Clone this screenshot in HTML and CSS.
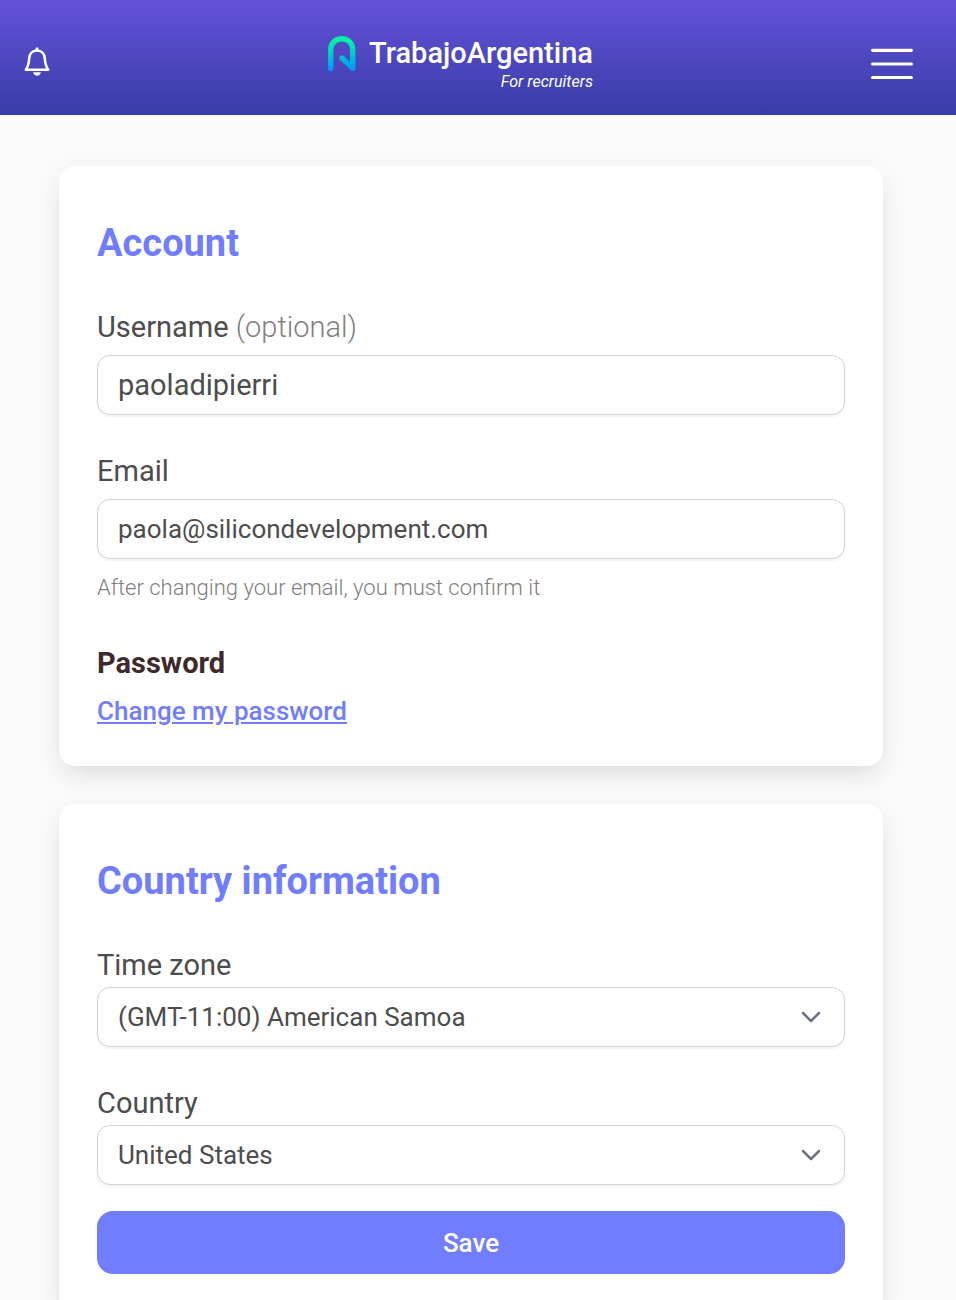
FILE: index.html
```html
<!DOCTYPE html>
<html lang="en">
<head>
<meta charset="utf-8">
<meta name="viewport" content="width=device-width, initial-scale=1">
<title>TrabajoArgentina – Account</title>
<link rel="stylesheet" href="styles.css">
</head>
<body>
<header class="topbar">
  <button class="icon-button notifications" type="button" aria-label="Notifications">
    <svg class="bell" viewBox="0 0 26 30" fill="none" stroke="#fff" stroke-width="2.500" stroke-linejoin="round" stroke-linecap="round">
      <path d="M13 3.600C8 3.600 5.400 7 5.200 11.300C5 16.500 4.400 19 1.800 22.700H24.200C21.600 19 21 16.500 20.800 11.300C20.600 7 18 3.600 13 3.600Z"/>
      <path d="M13 1.800V3" stroke-width="3"/>
      <path d="M9.200 25.300H16.800C16.500 27.500 15 28.800 13 28.800S9.500 27.500 9.200 25.300Z" fill="#fff" stroke="none"/>
    </svg>
  </button>
  <a class="brand" href="#">
    <svg class="brand-mark" viewBox="0 0 28 36" fill="none" stroke="url(#mark)" stroke-width="5.400" stroke-linecap="round" stroke-linejoin="round">
      <defs>
        <linearGradient id="mark" gradientUnits="userSpaceOnUse" x1="0" y1="0" x2="0" y2="36">
          <stop offset="0.150" stop-color="#00f2a6"/>
          <stop offset="1" stop-color="#0090ff"/>
        </linearGradient>
      </defs>
      <path d="M2.700 32.600V13.500C2.700 7 7.800 2.700 13.800 2.700S24.700 7 24.700 13.500V32.400L14 22"/>
    </svg>
    <span class="brand-text">
      <span class="brand-name">TrabajoArgentina</span>
      <span class="brand-tag">For recruiters</span>
    </span>
  </a>
  <button class="icon-button" type="button" aria-label="Menu">
    <svg class="burger" viewBox="0 0 42 32" stroke="#fff" stroke-width="3.200" stroke-linecap="round">
      <path d="M1.600 2.300H40.400M1.600 16H40.400M1.600 29.500H40.400"/>
    </svg>
  </button>
</header>
<main class="page">
  <section class="card">
    <h2 class="card-title">Account</h2>
    <div class="field">
      <label class="label" for="username">Username <span class="optional">(optional)</span></label>
      <input class="control control-large" id="username" type="text" value="paoladipierri">
    </div>
    <div class="field">
      <label class="label" for="email">Email</label>
      <input class="control" id="email" type="email" value="paola@silicondevelopment.com" aria-describedby="email-hint">
      <p class="hint" id="email-hint">After changing your email, you must confirm it</p>
    </div>
    <h3 class="subtitle">Password</h3>
    <a class="link" href="#">Change my password</a>
  </section>
  <form class="card">
    <h2 class="card-title">Country information</h2>
    <div class="field field-tight">
      <label class="label" for="timezone">Time zone</label>
      <div class="select">
        <select class="control" id="timezone"><option>(GMT-11:00) American Samoa</option></select>
        <svg class="chevron" viewBox="0 0 20 12" fill="none" stroke="#6b7280" stroke-width="2.500" stroke-linecap="round" stroke-linejoin="round"><path d="M2 2L10 10L18 2"/></svg>
      </div>
    </div>
    <div class="field field-tight">
      <label class="label" for="country">Country</label>
      <div class="select">
        <select class="control" id="country"><option>United States</option></select>
        <svg class="chevron" viewBox="0 0 20 12" fill="none" stroke="#6b7280" stroke-width="2.500" stroke-linecap="round" stroke-linejoin="round"><path d="M2 2L10 10L18 2"/></svg>
      </div>
    </div>
    <button class="save" type="button">Save</button>
  </form>
</main>
</body>
</html>
```
FILE: styles.css
```css
* {
  box-sizing: border-box;
}

body {
  margin: 0;
  background: #fafafa;
  color: #4d4d4d;
  font-family: Roboto, "Liberation Sans", sans-serif;
}

.topbar {
  display: flex;
  align-items: center;
  justify-content: space-between;
  padding: 32px 43px 20px 24px;
  background: linear-gradient(#6552d9, #373da7);
}

.icon-button {
  padding: 0;
  border: 0;
  background: none;
  cursor: pointer;
}

.icon-button svg {
  display: block;
}

.notifications {
  padding-bottom: 4px;
}

.bell {
  width: 26px;
  height: 30px;
}

.burger {
  width: 42px;
  height: 32px;
}

.brand {
  display: flex;
  align-items: flex-start;
  gap: 13px;
  color: #fff;
  text-decoration: none;
}

.brand-mark {
  width: 28px;
  height: 36px;
  margin-top: 4px;
}

.brand-text {
  display: flex;
  flex-direction: column;
  align-items: flex-end;
  padding-bottom: 6px;
}

.brand-name {
  font-size: 29px;
  font-weight: 500;
  line-height: 42px;
}

.brand-tag {
  font-size: 16px;
  font-style: italic;
  line-height: 15px;
}

.page {
  display: flex;
  flex-direction: column;
  gap: 38px;
  padding: 51px 73px 38px 59px;
}

.card {
  padding: 55px 38px 39px;
  border-radius: 16px;
  background: #fff;
  box-shadow: 0 6px 30px rgba(10, 60, 40, 0.06), 0 12px 24px -8px rgba(40, 30, 70, 0.12);
}

.card-title {
  margin: 0 0 42px;
  color: #717dff;
  font-size: 38px;
  font-weight: 700;
  line-height: 44px;
}

.field {
  display: flex;
  flex-direction: column;
  gap: 8px;
  margin-bottom: 36px;
}

.field-tight {
  gap: 2px;
}

.label {
  font-size: 29px;
  line-height: 40px;
}

.optional {
  color: #808080;
  font-weight: 300;
}

.control {
  width: 100%;
  height: 60px;
  padding: 0 20px;
  border: 1px solid #d1d5db;
  border-radius: 13px;
  background: #fff;
  box-shadow: 0 2px 3px rgba(0, 0, 0, 0.05);
  color: #4d4d4d;
  font-family: inherit;
  font-size: 26px;
  appearance: none;
}

.control-large {
  font-size: 29px;
}

.select {
  display: grid;
  align-items: center;
}

.select > * {
  grid-area: 1 / 1;
}

.chevron {
  width: 20px;
  height: 12px;
  margin-right: 24px;
  justify-self: end;
  pointer-events: none;
}

.hint {
  margin: 6px 0 0;
  color: #808080;
  font-size: 22px;
  font-weight: 300;
  line-height: 30px;
}

.subtitle {
  margin: 40px 0 12px;
  color: #3f2a2b;
  font-size: 29px;
  font-weight: 700;
  line-height: 40px;
}

.link {
  display: block;
  color: #717dff;
  font-size: 26px;
  font-weight: 500;
  line-height: 32px;
}

.save {
  display: block;
  width: 100%;
  height: 63px;
  margin-top: -10px;
  border: 0;
  border-radius: 16px;
  background: #717dff;
  color: #fff;
  font-family: inherit;
  font-size: 26px;
  font-weight: 500;
}
```
